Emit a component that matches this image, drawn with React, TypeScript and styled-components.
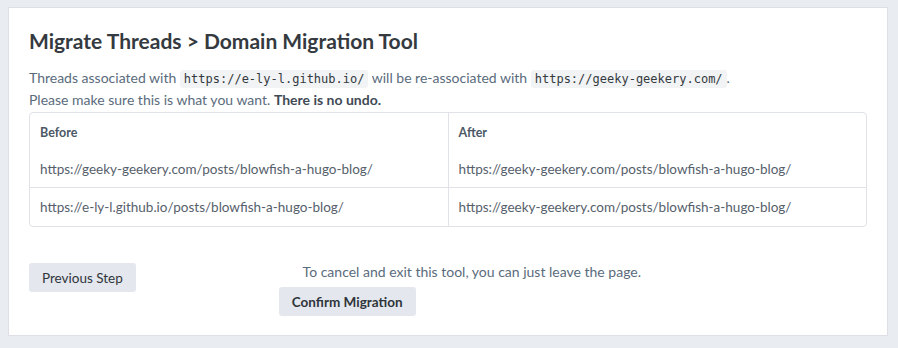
import React from "react";
import styled, { createGlobalStyle } from "styled-components";

const GlobalStyle = createGlobalStyle`
  html, body {
    margin: 0;
    padding: 0;
    background: #e9ecf0;
  }
  body {
    padding: 7px 10px 12px 8px;
    font-family: "Lato", "Liberation Sans", sans-serif;
  }
`;

type Row = { before: string; after: string };

const rows: Row[] = [
  {
    before: "https://geeky-geekery.com/posts/blowfish-a-hugo-blog/",
    after: "https://geeky-geekery.com/posts/blowfish-a-hugo-blog/",
  },
  {
    before: "https://e-ly-l.github.io/posts/blowfish-a-hugo-blog/",
    after: "https://geeky-geekery.com/posts/blowfish-a-hugo-blog/",
  },
];

const App = () => {
  return (
    <>
      <GlobalStyle />
      <Card>
        <Title>Migrate Threads &gt; Domain Migration Tool</Title>
        <Intro>
          Threads associated with <Code>https://e-ly-l.github.io/</Code> will be
          re-associated with <Code>https://geeky-geekery.com/</Code>.
          <br />
          Please make sure this is what you want. <strong>There is no undo.</strong>
        </Intro>
        <TableWrap>
          <Table>
            <thead>
              <tr>
                <Th>Before</Th>
                <Th>After</Th>
              </tr>
            </thead>
            <tbody>
              {rows.map((row, i) => (
                <tr key={i}>
                  <Td $first={i === 0}>{row.before}</Td>
                  <Td $first={i === 0}>{row.after}</Td>
                </tr>
              ))}
            </tbody>
          </Table>
        </TableWrap>
        <Footer>
          <Button>Previous Step</Button>
          <ConfirmBlock>
            <Note>To cancel and exit this tool, you can just leave the page.</Note>
            <Button $bold>Confirm Migration</Button>
          </ConfirmBlock>
        </Footer>
      </Card>
    </>
  );
};

export default App;

const Card = styled.div`
  box-sizing: border-box;
  height: 329px;
  background: #fff;
  border: 1px solid #dde1e6;
  padding: 20px 20px 20px 20px;
`;

const Title = styled.h1`
  margin: 0 0 13px 0;
  font-size: 21px;
  font-weight: 700;
  color: #343a40;
  line-height: 26px;
`;

const Intro = styled.p`
  margin: 0 0 1px 0;
  font-size: 14px;
  line-height: 22px;
  color: #5a6b7c;

  strong {
    font-weight: 700;
    color: #3f4a55;
  }
`;

const Code = styled.code`
  font-family: "DejaVu Sans Mono", "Liberation Mono", monospace;
  font-size: 12px;
  line-height: 14px;
  color: #343a40;
  background: #f1f3f5;
  border-radius: 3px;
  padding: 2px 4px;
`;

const TableWrap = styled.div`
  border: 1px solid #dfe3e8;
  border-radius: 4px;
  overflow: hidden;
`;

const Table = styled.table`
  width: 100%;
  border-collapse: collapse;
  table-layout: fixed;
`;

const Th = styled.th`
  text-align: left;
  font-size: 12.5px;
  font-weight: 700;
  color: #4b5866;
  padding: 11px 10px 10px 10px;
  line-height: 17px;

  & + & {
    border-left: 1px solid #dfe3e8;
  }
`;

const Td = styled.td<{ $first: boolean }>`
  font-size: 13.5px;
  color: #56606b;
  line-height: 18px;
  padding: ${({ $first }) => ($first ? "9px 10px 9px 10px" : "10px 10px 10px 10px")};
  border-top: ${({ $first }) => ($first ? "none" : "1px solid #dfe3e8")};

  & + & {
    border-left: 1px solid #dfe3e8;
  }
`;

const Footer = styled.div`
  display: flex;
  align-items: flex-start;
  margin-top: 36px;
`;

const ConfirmBlock = styled.div`
  display: flex;
  flex-direction: column;
  align-items: flex-start;
  margin-left: 143px;
  width: 386px;
`;

const Note = styled.p`
  margin: 0 0 6px 0;
  width: 100%;
  text-align: center;
  font-size: 14px;
  line-height: 18px;
  color: #5a6b7c;
`;

const Button = styled.button<{ $bold?: boolean }>`
  margin: 0;
  border: none;
  border-radius: 3px;
  background: #e4e7ed;
  color: #2f353b;
  font-family: inherit;
  font-size: 13.5px;
  font-weight: ${({ $bold }) => ($bold ? 700 : 400)};
  height: 29px;
  padding: 0 13px;
  cursor: pointer;
`;
